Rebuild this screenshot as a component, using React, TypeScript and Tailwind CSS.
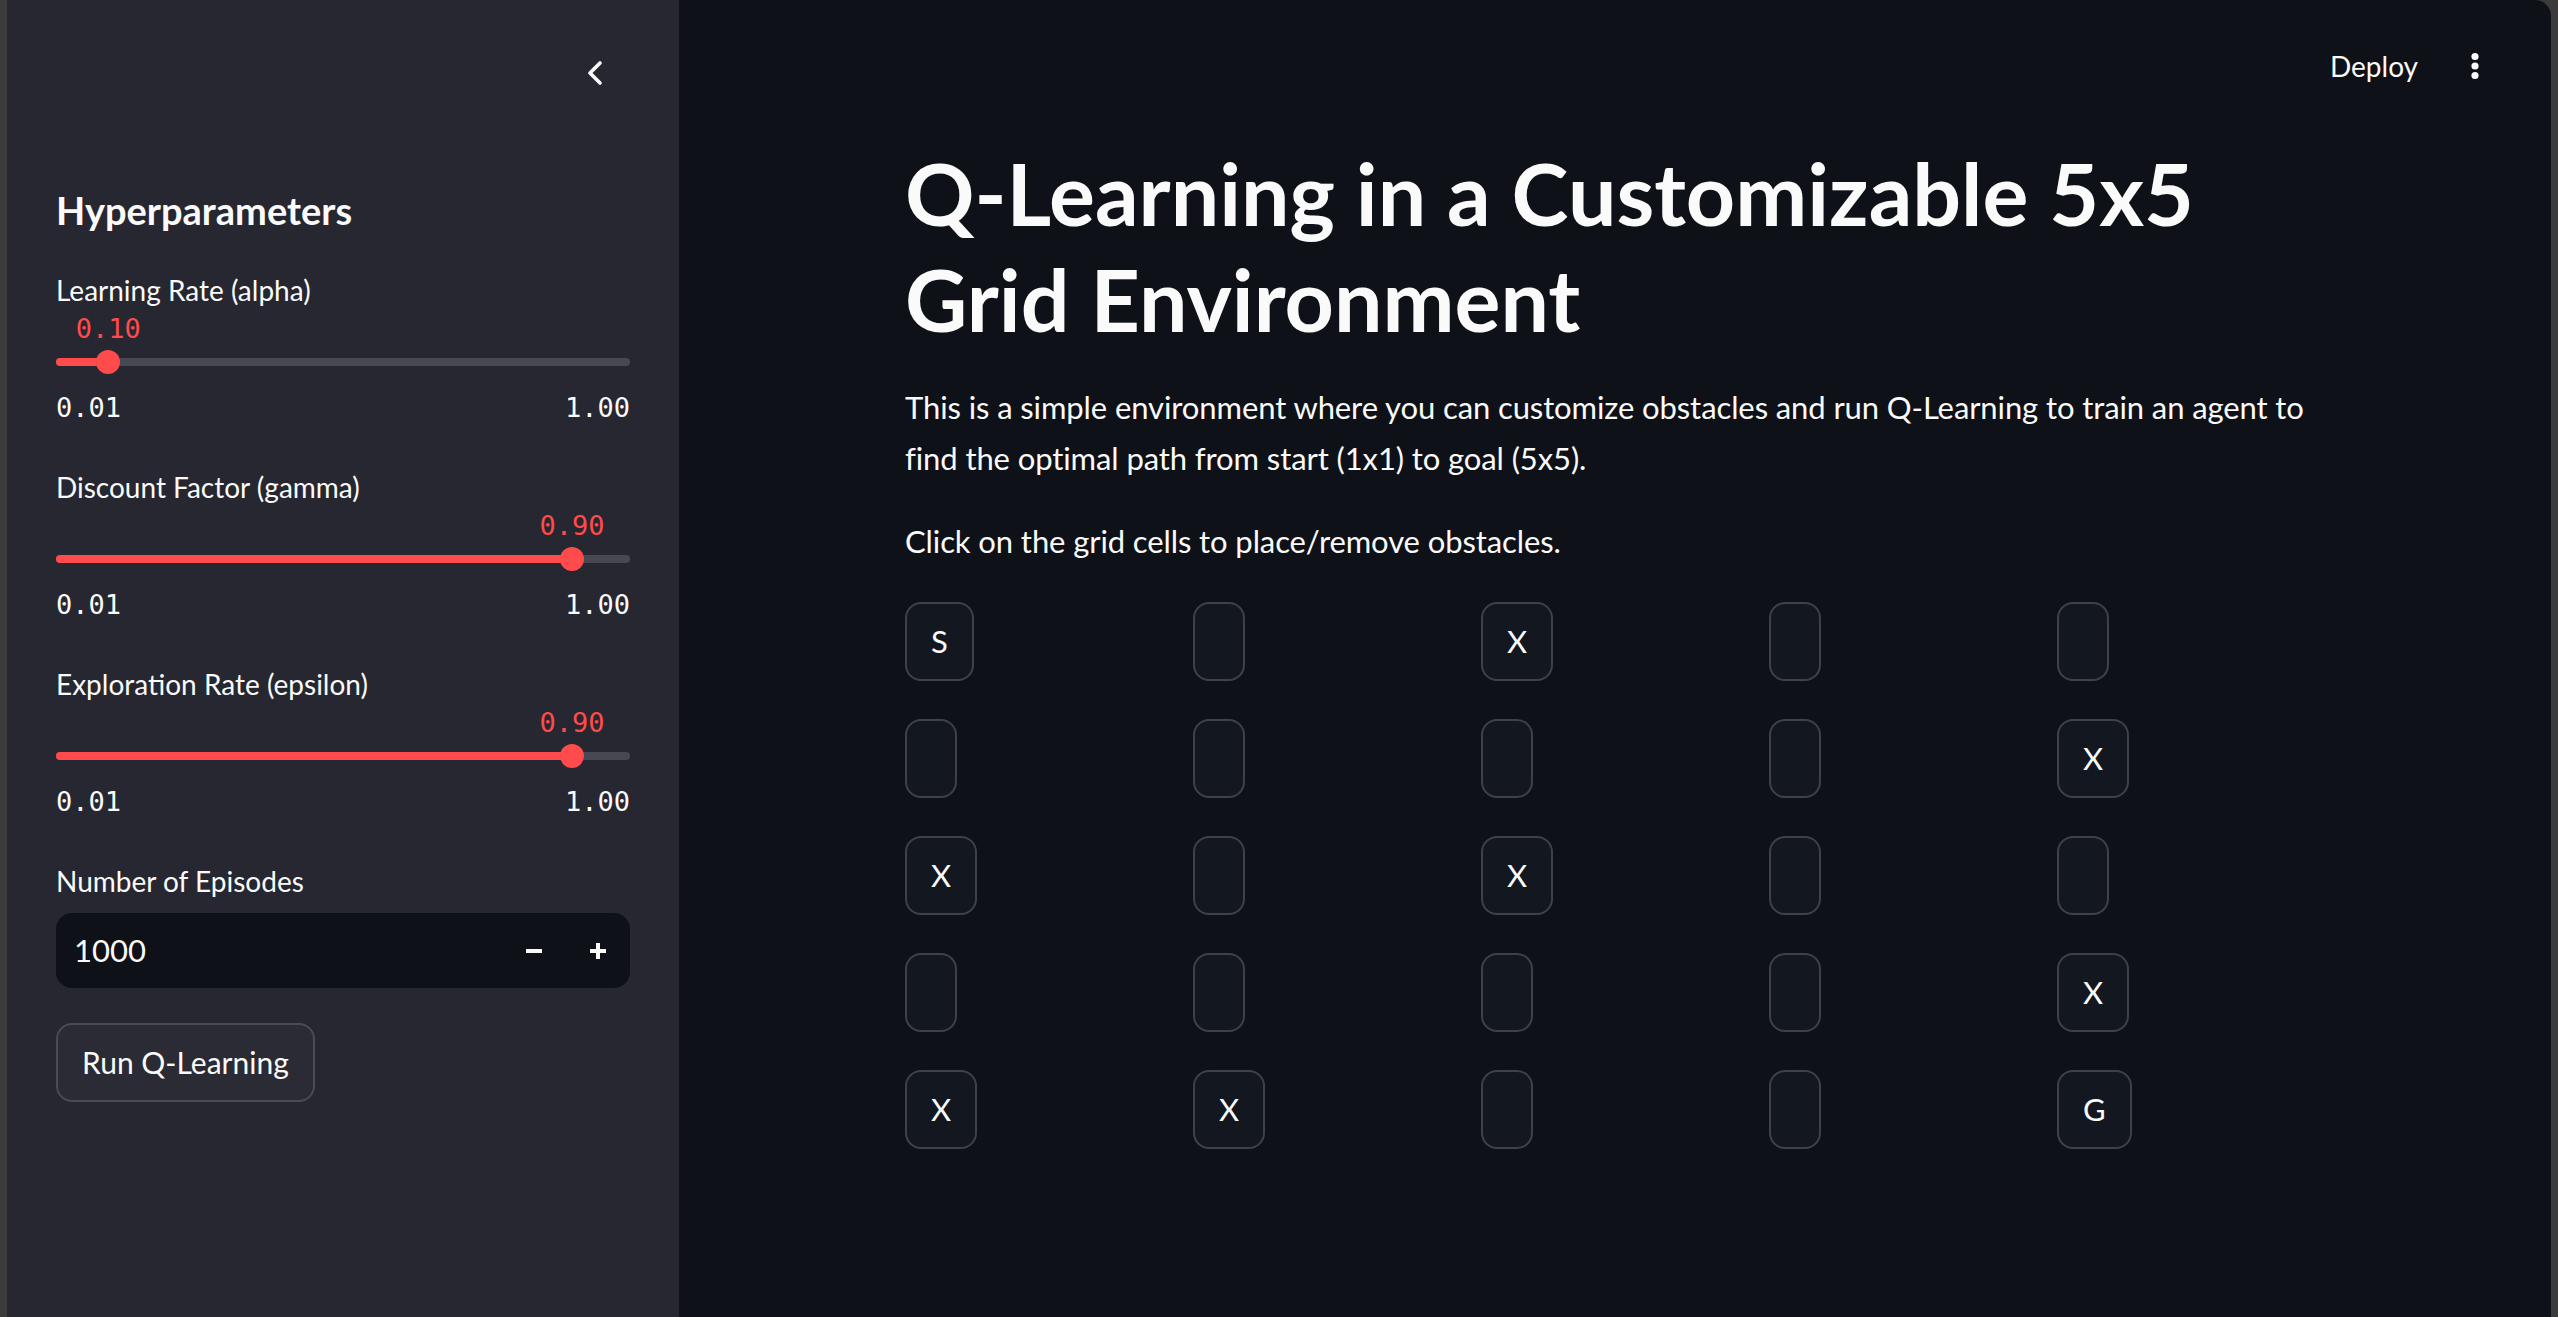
import { ChevronLeft } from "lucide-react";

type SliderProps = {
  label: string;
  value: number;
  min: number;
  max: number;
};

function Slider({ label, value, min, max }: SliderProps) {
  const pct = ((value - min) / (max - min)) * 100;
  return (
    <div className="mb-[44px]">
      <div className="h-[40px] flex items-center text-[28px]">{label}</div>
      <div className="relative h-[30px] mt-[4px] font-['DejaVu_Sans_Mono',monospace] text-[27px] leading-[30px] text-[#ff4b4b]">
        <span className="absolute top-0 -translate-x-1/2" style={{ left: `${pct}%` }}>
          {value.toFixed(2)}
        </span>
      </div>
      <div className="h-[36px] flex items-center">
        <div className="relative w-full h-[8px] rounded-full bg-[#474851]">
          <div className="absolute left-0 top-0 h-full rounded-full bg-[#ff4b4b]" style={{ width: `${pct}%` }} />
          <div
            className="absolute top-1/2 w-[24px] h-[24px] -translate-x-1/2 -translate-y-1/2 rounded-full bg-[#ff4b4b]"
            style={{ left: `${pct}%` }}
          />
        </div>
      </div>
      <div className="mt-[13px] h-[30px] flex justify-between items-center font-['DejaVu_Sans_Mono',monospace] text-[27px]">
        <span>{min.toFixed(2)}</span>
        <span>{max.toFixed(2)}</span>
      </div>
    </div>
  );
}

const grid = [
  ["S", "", "X", "", ""],
  ["", "", "", "", "X"],
  ["X", "", "X", "", ""],
  ["", "", "", "", "X"],
  ["X", "X", "", "", "G"],
];

function Sidebar() {
  return (
    <aside className="w-[672px] shrink-0 bg-[#262730] px-[49px]">
      <div className="h-[146px] flex items-center justify-end pr-[15px]">
        <ChevronLeft size={40} strokeWidth={2.2} className="text-[#fafafa]" />
      </div>
      <h2 className="mt-[44px] h-[40px] flex items-center text-[38px] font-bold">Hyperparameters</h2>
      <div className="mt-[40px]">
        <Slider label="Learning Rate (alpha)" value={0.1} min={0.01} max={1} />
        <Slider label="Discount Factor (gamma)" value={0.9} min={0.01} max={1} />
        <Slider label="Exploration Rate (epsilon)" value={0.9} min={0.01} max={1} />
      </div>
      <div className="h-[40px] flex items-center text-[28px]">Number of Episodes</div>
      <div className="mt-[12px] h-[75px] rounded-[16px] bg-[#0e1117] flex items-center">
        <span className="flex-1 pl-[18px] text-[31px]">1000</span>
        <button className="w-[64px] h-full flex items-center justify-center">
          <span className="w-[16px] h-[4px] bg-[#fafafa]" />
        </button>
        <button className="w-[64px] h-full flex items-center justify-center relative">
          <span className="w-[16px] h-[4px] bg-[#fafafa]" />
          <span className="absolute w-[4px] h-[16px] bg-[#fafafa]" />
        </button>
      </div>
      <button className="mt-[35px] h-[79px] px-[24px] rounded-[16px] border-2 border-[#4a4b54] bg-[#2a2b34] text-[30px] text-[#fafafa]">
        Run Q-Learning
      </button>
    </aside>
  );
}

function Main() {
  return (
    <main className="flex-1 bg-[#0e1117] rounded-tr-[16px]">
      <header className="h-[132px] flex items-center justify-end gap-[52px] pr-[71px]">
        <span className="text-[28px]">Deploy</span>
        <svg width="10" height="30" viewBox="0 0 10 30" fill="#fafafa">
          <circle cx="5" cy="5.5" r="3.6" />
          <circle cx="5" cy="15" r="3.6" />
          <circle cx="5" cy="24.5" r="3.6" />
        </svg>
      </header>
      <div className="pl-[226px] w-[1634px]">
        <h1 className="mt-[8px] text-[86px] leading-[106px] font-bold">
          Q-Learning in a Customizable 5x5 Grid Environment
        </h1>
        <p className="mt-[30px] text-[31px] tracking-[-0.1px] leading-[51px]">
          This is a simple environment where you can customize obstacles and run Q-Learning to train an agent to
          find the optimal path from start (1x1) to goal (5x5).
        </p>
        <p className="mt-[32px] text-[31px] tracking-[-0.1px] leading-[51px]">
          Click on the grid cells to place/remove obstacles.
        </p>
        <div className="mt-[35px] grid grid-cols-5 gap-x-[32px] gap-y-[38px]">
          {grid.flat().map((cell, i) => (
            <div key={i} className="flex">
              <button className="h-[79px] min-w-[51px] px-[24px] rounded-[16px] border-2 border-[#3f4148] bg-[#131720] text-[31px] text-[#fafafa]">
                {cell}
              </button>
            </div>
          ))}
        </div>
      </div>
    </main>
  );
}

export default function App() {
  return (
    <div className="h-[1317px] w-full flex bg-[#3b3b3b] px-[7px] overflow-hidden font-[Lato,sans-serif] text-[#fafafa]">
      <Sidebar />
      <Main />
    </div>
  );
}
